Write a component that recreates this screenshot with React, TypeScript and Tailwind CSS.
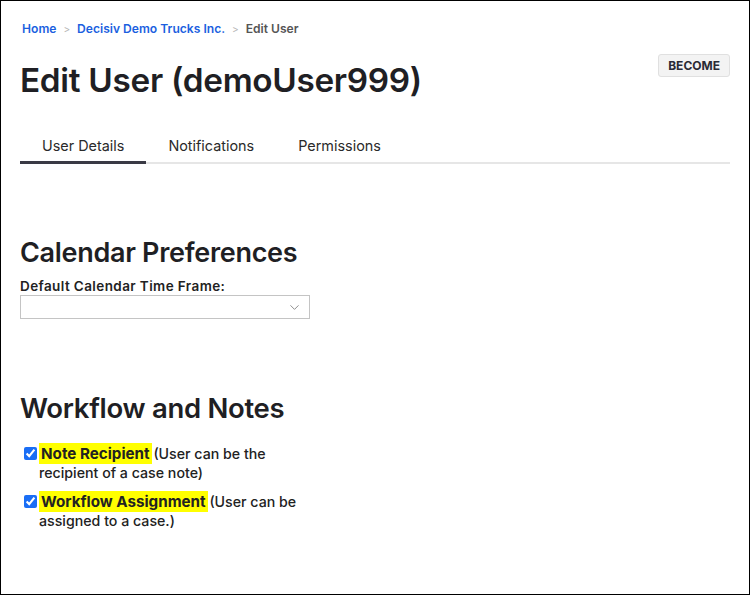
import { ChevronDown } from "lucide-react";

const font = { fontFamily: "Inter, 'Noto Sans', sans-serif" };

function Crumbs() {
  return (
    <nav className="flex items-center gap-[7px] text-[12.1px] font-semibold leading-4 pl-[2px]">
      <a className="text-[#1b5fe0]">Home</a>
      <span className="text-[#b5b5b5] font-normal text-[10px]">&gt;</span>
      <a className="text-[#1b5fe0]">Decisiv Demo Trucks Inc.</a>
      <span className="text-[#b5b5b5] font-normal text-[10px]">&gt;</span>
      <span className="text-[#555]">Edit User</span>
    </nav>
  );
}

function Tabs() {
  const tabs = ["User Details", "Notifications", "Permissions"];
  return (
    <div className="flex border-b-2 border-[#e6e6e6] mt-[24px]">
      {tabs.map((t, i) => (
        <div
          key={t}
          className={
            "px-[22px] pt-[10px] pb-[5px] text-[14.4px] leading-5 text-[#2a2a2a] -mb-[2px] border-b-[3px] " +
            (i === 0 ? "border-[#3a3a45]" : "border-transparent")
          }
        >
          {t}
        </div>
      ))}
    </div>
  );
}

function CheckRow({ title, rest }: { title: string; rest: string }) {
  return (
    <div className="flex items-start gap-[2px] w-[290px]">
      <input type="checkbox" defaultChecked className="mt-[3px] ml-[4px] w-[13px] h-[13px] shrink-0 accent-[#1a6ef5]" />
      <p className="text-[14.2px] leading-[19px] text-[#222] font-medium">
        <span className="bg-[#ffff00] font-bold text-[15.2px] px-[2px] py-[1px] mr-[-2px]">{title}</span> {rest}
      </p>
    </div>
  );
}

export default function App() {
  return (
    <div style={font} className="w-[750px] h-[595px] border border-black bg-white overflow-hidden">
      <div className="px-[19px] pt-[20px]">
        <div className="flex items-start justify-between">
          <div>
            <Crumbs />
            <h1 className="mt-[21px] text-[33.3px] leading-[44px] font-semibold text-[#1f1f24] tracking-[-0.3px]">
              Edit User (demoUser999)
            </h1>
          </div>
          <button className="mt-[33px] px-[9px] h-[23px] bg-[#f3f3f3] border border-[#e0e0e0] rounded-[3px] text-[12px] font-bold text-[#2a2a35]">
            BECOME
          </button>
        </div>
        <Tabs />

        <h2 className="mt-[71px] text-[27px] leading-[36px] font-semibold text-[#1f1f24] tracking-[-0.3px]">
          Calendar Preferences
        </h2>
        <label className="block mt-[7px] text-[13.5px] leading-4 font-semibold text-[#222] tracking-[0.4px]">
          Default Calendar Time Frame:
        </label>
        <div className="mt-[1px] w-[290px] h-[24px] border border-[#c4c4c4] flex items-center justify-end pr-[7px]">
          <ChevronDown className="w-[15px] h-[15px] text-[#888]" strokeWidth={1.5} />
        </div>

        <h2 className="mt-[71px] text-[27.5px] leading-[36px] font-semibold text-[#1f1f24] tracking-[-0.3px]">
          Workflow and Notes
        </h2>
        <div className="mt-[18px] flex flex-col gap-[10px]">
          <CheckRow title="Note Recipient" rest="(User can be the recipient of a case note)" />
          <CheckRow title="Workflow Assignment" rest="(User can be assigned to a case.)" />
        </div>
      </div>
    </div>
  );
}
